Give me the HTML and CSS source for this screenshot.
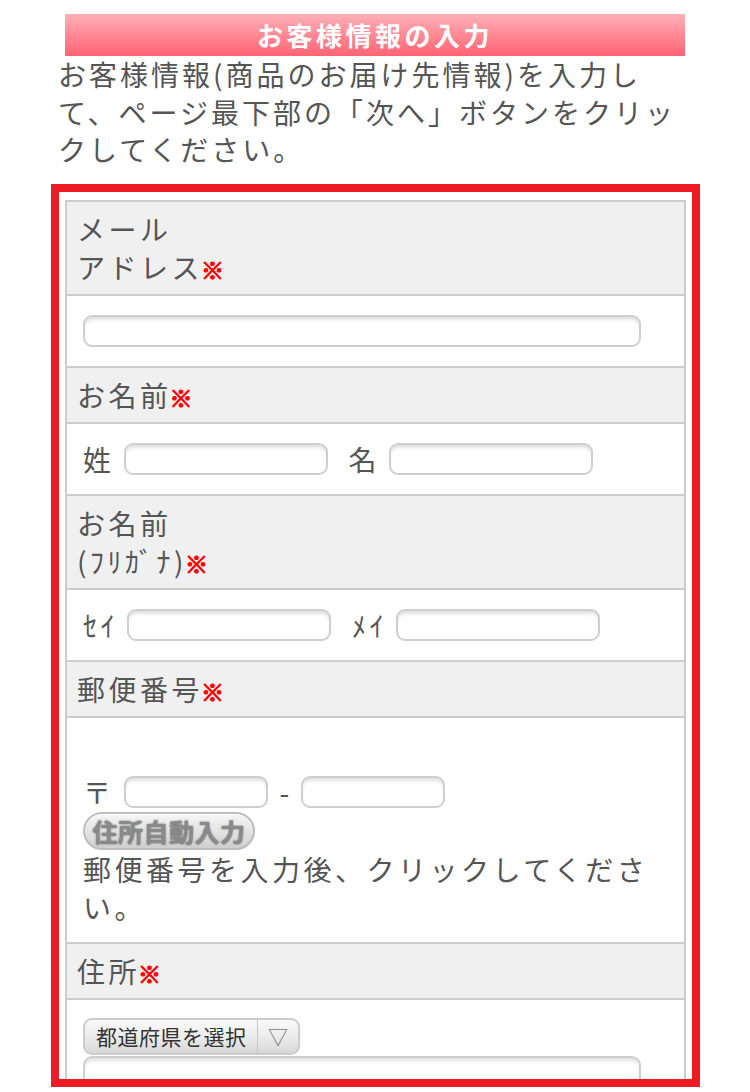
FILE: index.html
```html
<!DOCTYPE html>
<html lang="ja">
<head>
<meta charset="utf-8">
<title>お客様情報の入力</title>
<link rel="stylesheet" href="styles.css">
</head>
<body>
<div class="page">
  <h2 class="title-bar">お客様情報の入力</h2>
  <p class="intro">お客様情報(商品のお届け先情報)を入力して、ページ最下部の「次へ」ボタンをクリックしてください。</p>

  <div class="form-frame">
    <dl class="form-table">
      <dt>メール<br>アドレス<span class="req">※</span></dt>
      <dd class="row"><input class="field field-wide" type="text"></dd>

      <dt>お名前<span class="req">※</span></dt>
      <dd class="row">
        <span class="lbl">姓</span><input class="field field-name" type="text">
        <span class="lbl lbl-next">名</span><input class="field field-name" type="text">
      </dd>

      <dt>お名前<br>(ﾌﾘｶﾞﾅ)<span class="req">※</span></dt>
      <dd class="row">
        <span class="lbl">ｾｲ</span><input class="field field-name" type="text">
        <span class="lbl lbl-next">ﾒｲ</span><input class="field field-name" type="text">
      </dd>

      <dt>郵便番号<span class="req">※</span></dt>
      <dd class="zip-cell">
        <div class="blank-line"></div>
        <div class="row zip-row">
          <span class="lbl">〒</span><input class="field field-zip" type="text"><span class="dash">-</span><input class="field field-zip" type="text">
        </div>
        <button class="auto-btn" type="button">住所自動入力</button>
        <p class="note">郵便番号を入力後、クリックしてください。</p>
      </dd>

      <dt>住所<span class="req">※</span></dt>
      <dd class="addr-cell">
        <div class="pref-select">
          <span class="pref-text">都道府県を選択</span>
          <span class="pref-arrow">▽</span>
        </div>
        <input class="field field-wide" type="text">
        <p class="note">市区町村・番地・建物名を入力してください。</p>
      </dd>
    </dl>
  </div>
</div>
</body>
</html>
```

FILE: styles.css
```css
html, body {
  margin: 0;
  padding: 0;
  background: #ffffff;
}

body {
  font-family: "Noto Sans CJK JP", "Noto Sans", sans-serif;
  color: #555555;
}

.page {
  padding-top: 14px;
}

.title-bar {
  margin: 0 65px;
  height: 42px;
  line-height: 42px;
  background: linear-gradient(to bottom, #ffb0b7 0%, #ff6373 100%);
  color: #ffffff;
  text-align: center;
  font-size: 26px;
  font-weight: bold;
  letter-spacing: 3.5px;
}

.intro {
  margin: 0 58px;
  font-size: 28px;
  line-height: 37.5px;
  letter-spacing: 3px;
  color: #555555;
}

.form-frame {
  position: relative;
  margin: 15.5px 50px 0 51px;
  height: 903px;
  padding: 16px 14px 0 14px;
  box-sizing: border-box;
}

.form-frame::after {
  content: "";
  position: absolute;
  inset: 0;
  border: 8px solid #ed1c24;
  pointer-events: none;
}

.form-table {
  margin: 0;
  border: 2px solid #cccccc;
  font-size: 28px;
  letter-spacing: 3.5px;
  line-height: 38px;
  color: #555555;
}

.form-table dt {
  background: #f0f0f0;
  padding: 8px 10px;
  border-bottom: 2px solid #cccccc;
}

.form-table dd {
  margin: 0;
  background: #ffffff;
  border-bottom: 2px solid #cccccc;
}

.req {
  color: #ff0000;
  font-size: 23px;
  font-weight: 900;
  letter-spacing: 0;
  line-height: 1;
  margin-left: -2px;
  -webkit-text-stroke: 1.2px #ff0000;
}

.row {
  display: flex;
  align-items: center;
}

dd.row {
  height: 32px;
  padding: 19px 16px;
}

.lbl {
  margin-right: 9px;
  line-height: 32px;
}

.lbl-next {
  margin-left: 21px;
}

.field {
  box-sizing: border-box;
  height: 32px;
  margin: 0;
  padding: 0 8px;
  border: 2px solid #cfcfcf;
  border-radius: 9px;
  background: #ffffff;
  box-shadow: inset 0 4px 4px -2px rgba(0, 0, 0, 0.16);
  font-family: inherit;
  font-size: 18px;
  outline: none;
}

.field-wide {
  width: 558px;
}

.field-name {
  width: 204px;
}

.field-zip {
  width: 144px;
}

.zip-cell {
  padding: 18px 16px 16px;
}

.blank-line {
  height: 38px;
}

.zip-row {
  height: 36px;
}

.dash {
  margin: 0 8px 0 12px;
  line-height: 32px;
}

.auto-btn {
  display: block;
  box-sizing: border-box;
  margin: 2px 0 0 0;
  width: 172px;
  height: 38px;
  padding: 0;
  border: 2px solid #bdbdbd;
  border-radius: 19px;
  background: linear-gradient(to bottom, #f6f6f6 0%, #e2e2e2 55%, #cfcfcf 100%);
  box-shadow: inset 0 1px 0 #ffffff;
  font-family: inherit;
  font-size: 25px;
  font-weight: bold;
  letter-spacing: 0.5px;
  color: #8a8a8a;
  text-shadow: 0 0 2px #555555;
  line-height: 34px;
}

.note {
  margin: 0;
}

.addr-cell {
  padding: 18px 16px 16px;
}

.pref-select {
  display: flex;
  box-sizing: border-box;
  width: 217px;
  height: 37px;
  border: 2px solid #cccccc;
  border-radius: 9px;
  background: linear-gradient(to bottom, #fafafa 0%, #ececec 50%, #d8d8d8 100%);
  overflow: hidden;
}

.pref-text {
  flex: 1;
  padding-left: 11px;
  font-size: 21px;
  letter-spacing: 0.5px;
  line-height: 33px;
  color: #333333;
}

.pref-arrow {
  width: 40px;
  border-left: 1px solid #c8c8c8;
  text-align: center;
  font-size: 20px;
  letter-spacing: 0;
  line-height: 33px;
  color: #777777;
}

.addr-cell .field-wide {
  display: block;
  margin-top: 1px;
}
```
